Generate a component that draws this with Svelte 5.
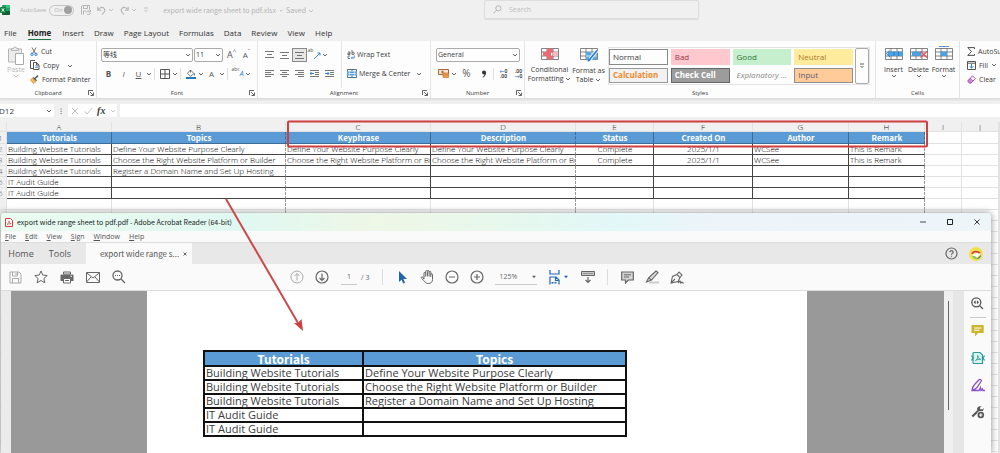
<script>
  const tabs = ['File', 'Home', 'Insert', 'Draw', 'Page Layout', 'Formulas', 'Data', 'Review', 'View', 'Help'];
  const columns = ['A', 'B', 'C', 'D', 'E', 'F', 'G', 'H', 'I', 'J'];
  const heads = ['Tutorials', 'Topics', 'Keyphrase', 'Description', 'Status', 'Created On', 'Author', 'Remark'];
  const b = 'Building Website Tutorials';
  const define = 'Define Your Website Purpose Clearly';
  const choose = 'Choose the Right Website Platform or Builder';
  const register = 'Register a Domain Name and Set Up Hosting';
  const rows = [
    [b, define, define, define, 'Complete', '2025/1/1', 'WCSee', 'This is Remark'],
    [b, choose, choose, choose, 'Complete', '2025/1/1', 'WCSee', 'This is Remark'],
    [b, register, '', '', '', '', '', ''],
    ['IT Audit Guide', '', '', '', '', '', '', ''],
    ['IT Audit Guide', '', '', '', '', '', '', '']
  ];
  const blankRows = Array.from({ length: 24 }, (_, i) => i + 7);
  const cellStyles = [
    ['Normal', 'normal'], ['Bad', 'bad'], ['Good', 'good'], ['Neutral', 'neutral'],
    ['Calculation', 'calc'], ['Check Cell', 'check'], ['Explanatory ...', 'explain'], ['Input', 'inputstyle']
  ];
  const lines = (a) => a.map(([x1, x2, y]) => `M${x1} ${y}H${x2}`).join('');
  const g = (d, extra = '') => `<path d="${d}" fill="none" stroke="currentColor" ${extra}/>`;
  const grid = '<path d="M.5 2.500h17v11h-17zM6 2.500v11M12 2.500v11M.5 6h17M.5 10h17" fill="#fff" stroke="#666" stroke-width=".8"/>';

  const icons = {
    excel: [10, 10, '<rect x="2" width="8" height="10" rx="1" fill="#21a366"/><path d="M6 0h3a1 1 0 0 1 1 1v2H6z" fill="#33c481"/><path d="M2 6h8v3a1 1 0 0 1-1 1H3a1 1 0 0 1-1-1z" fill="#185c37"/><rect y="2" width="6" height="6" rx="1" fill="#107c41"/><path d="M1.700 3.300l2.600 3.400M4.300 3.300L1.700 6.700" stroke="#fff" stroke-width=".9"/>'],
    saveCloud: [10, 10, g('M.5 9.500v-8l1-1h7v4M2.500.5v3h4v-3M2.500 9.500V6H5M5.500 7.500a2 2 0 0 1 3.500-1M9.500 5v2h-2M9.500 8a2 2 0 0 1-3.500 1')],
    undo: [9, 9, g('M.8.8v3.500h3.500M.8 4.300C3 1 5.500.8 7 2.300s1 3-.5 4.500L5 8.300', 'stroke-width="1.100"')],
    redo: [9, 9, g('M8.200.8v3.500H4.700M8.200 4.300C6 1 3.500.8 2 2.300s-1 3 .5 4.500L4 8.300', 'stroke-width="1.100"')],
    more: [6, 6, g('M1 1h4M1.500 3l1.500 1.500L4.500 3', 'stroke-width=".8"')],
    chev: [6, 4, g('M1 1l2 2 2-2', 'stroke-width=".8"')],
    search: [9, 9, g('M8 3.300a2.600 2.600 0 1 1-5.200 0 2.600 2.600 0 0 1 5.200 0zM3.500 5.300L.6 8.300')],
    paste: [17, 19, '<path d="M1.500 3h13v13h-13z" fill="#ececec" stroke="#b5b5b5"/><path d="M4.500 4.500v-2h2a1.500 1.500 0 0 1 3 0h2v2z" fill="#eee" stroke="#b5b5b5"/><path d="M8.500 7.500h8v11h-8z" fill="#fff" stroke="#aaa"/>'],
    cut: [8, 9, '<path d="M2 .5l3.500 6M6 .5L2.500 6.500" stroke="#555" stroke-width=".8"/><circle cx="2" cy="7.300" r="1.200" fill="none" stroke="#2b7cd3"/><circle cx="6" cy="7.300" r="1.200" fill="none" stroke="#2b7cd3"/>'],
    copy: [10, 10, '<path d="M3 8.500H.5v-8H5" fill="none" stroke="#555"/><path d="M3.500 2.500h3l2.500 2.500v4.500H3.500zM6.500 2.500V5H9" fill="#fff" stroke="#555"/><path d="M5 6h3M5 7.500h3" stroke="#2b7cd3" stroke-width=".7"/>'],
    painter: [9, 9, '<path d="M5 3.500L8 .6" stroke="#555" stroke-width="1.500"/><path d="M3 2.500l3.500 3.300" stroke="#444" stroke-width="1.200"/><path d="M2.500 3L6 6.500 3.500 8.600.5 5z" fill="#f7b765" stroke="#d98a2b" stroke-width=".7"/>'],
    borders: [10, 10, g('M.5.5h9v9h-9zM5 .5v9M.5 5h9')],
    fill: [10, 10, '<path d="M4.500 1L8 4.500 4.500 7.300 1.500 4.300zM4.500 1v2.500" fill="#fff" stroke="#555" stroke-width=".8"/><path d="M8.500 4.500v2" stroke="#2b7cd3"/><path d="M0 8h10v2H0z" fill="#2477b8"/>'],
    orient: [8, 10, '<path d="M1 9l6-6M7 5.500V3H4.500" fill="none" stroke="#2b7cd3" stroke-width=".9"/>'],
    top: [9, 8, g(lines([[0, 9, 0.5], [2, 7, 3.5], [0, 9, 6.5]]), 'stroke-width=".8"')],
    middle: [9, 8, g(lines([[0, 9, 1.5], [2, 7, 4.5], [0, 9, 7.5]]), 'stroke-width=".8"')],
    bottom: [9, 10, g(lines([[0, 9, 2.5], [2, 7, 5.5], [0, 9, 8.5]]), 'stroke-width=".8"')],
    left: [9, 8, g(lines([[0, 9, 0.5], [0, 6, 2.5], [0, 9, 4.5], [0, 6, 6.5]]), 'stroke-width=".8"')],
    center: [9, 8, g(lines([[0, 9, 0.5], [2, 7, 2.5], [0, 9, 4.5], [2, 7, 6.5]]), 'stroke-width=".8"')],
    right: [9, 8, g(lines([[0, 9, 0.5], [3, 9, 2.5], [0, 9, 4.5], [3, 9, 6.5]]), 'stroke-width=".8"')],
    outdent: [9, 8, g('M0 .5h9M5 2.500h4M5 4.500h4M0 6.500h9', 'stroke-width=".8"') + '<path d="M0 3.500h4M1.500 2L0 3.500 1.500 5" fill="none" stroke="#2b7cd3"/>'],
    indent: [9, 8, g('M0 .5h9M5 2.500h4M5 4.500h4M0 6.500h9', 'stroke-width=".8"') + '<path d="M0 3.500h4M2.500 2L4 3.500 2.500 5" fill="none" stroke="#2b7cd3"/>'],
    wrap: [8, 9, '<path d="M1 2h2v2.500H.8V3.300H3M5 0v4.500h2V2.300H5M3 6H1v2.500h2" fill="none" stroke="#555" stroke-width=".8"/><path d="M4.500 8h2.700V5.500M5.500 6.800L4.300 8l1.200 1" fill="none" stroke="#2b7cd3" stroke-width=".8"/>'],
    merge: [10, 9, '<path d="M.5.5h9v8h-9zM5 .5v2M5 6.500v2" fill="#fff" stroke="#50708f"/><path d="M0 2.500h10v4H0z" fill="#5aa3dc"/><path d="M1.500 4.500h7M3 3.300L1.700 4.500 3 5.700M7 3.300l1.300 1.200L7 5.700" stroke="#fff" fill="none" stroke-width=".7"/>'],
    money: [11, 9, '<path d="M.5.500h10v5H.5z" fill="#f7e2d0" stroke="#a0653c"/><circle cx="4.500" cy="3" r="1.200" fill="#a0653c"/><path d="M5 4h5.500v4.500H5z" fill="#f0a14c" stroke="#c9732b" stroke-width=".7"/><path d="M5 6h5.500" stroke="#c9732b" stroke-width=".7"/>'],
    comma: [6, 8, '<circle cx="3" cy="2.500" r="2" fill="#333"/><path d="M5 2.500C5 5 3.800 6.500 2 7.500L1.500 6.800C3 6 3.500 5 3.500 3.500z" fill="#333"/>'],
    cond: [18, 15, grid + '<path d="M6 2.500h6v4H6zM2 6h8v4H2zM6 10h6v3.500H6z" fill="#ea6a74"/><path d="M12 6h5v4h-5z" fill="#f7b9be"/>'],
    table: [18, 16, grid + '<path d="M6 6h11v7.500H6z" fill="#5aa9e6"/><path d="M6 10h11M12 6v7.500" stroke="#fff" stroke-width=".7"/><path d="M10 13l7-8.500" stroke="#fff" stroke-width="3.400"/><path d="M10 13l7-8.500" stroke="#2b7cd3" stroke-width="1.800"/><path d="M7.500 15.500c0-2 1-3 2-3l1 1c0 1.500-1.500 2-3 2z" fill="#2b7cd3"/>'],
    insert: [18, 15, grid + '<path d="M3 5.500h15v4.500H3z" fill="#4aa0e0"/><path d="M9 5.500v4.500M13.500 5.500v4.500" stroke="#2b6ca8" stroke-width=".7"/><path d="M5 4.500L1.500 7.800 5 11" fill="none" stroke="#2b7cd3"/>'],
    del: [18, 15, grid + '<path d="M2 5.500h9v4.500H2z" fill="#4aa0e0"/><path d="M10.500 5.500l6.500 6M17 5.500l-6.500 6" stroke="#e8505b" stroke-width="1.200"/>'],
    format: [18, 15, grid + '<path d="M5.500 5.500H12v4.500H5.500z" fill="#4aa0e0"/><path d="M4 .5h10" stroke="#2b7cd3" stroke-width=".8"/>'],
    sum: [8, 9, g('M7.500 2V.6H.8L4.500 4.500.8 8.400h6.700V7', 'stroke-width=".9"')],
    down: [9, 9, '<path d="M.5.5h8v8h-8z" fill="#fff" stroke="#555"/><path d="M.5 2.200h8" stroke="#555"/><path d="M4.500 3v4M2.700 5.300l1.800 1.800 1.800-1.800" fill="none" stroke="#2b7cd3"/>'],
    eraser: [9, 9, '<path d="M5.500.8L8.300 3.600 4 8H2.500L.8 6z" fill="#fff" stroke="#a24ab3"/><path d="M3.200 3.300L6 6 4 8H2.500L.8 6z" fill="#cf8add" stroke="#a24ab3" stroke-width=".7"/>'],
    launch: [6, 6, g('M.5 5V.5H5M2 2l3 3M5.500 2.500v3h-3', 'stroke-width=".8"')],
    cross: [8, 8, g('M1 1l6 6M7 1L1 7', 'stroke-width=".9"')],
    tick: [9, 8, g('M.8 4.500L3 7l5.300-6', 'stroke-width=".9"')],
    acro: [8, 9, '<path d="M.5.5h5l2 2v6h-7z" fill="#fff" stroke="#d8393b"/><path d="M2 6.500c1.500-1 2-2.300 2-3.500M4 3c0 1.500 1 2.500 2.200 2.700-1.500 0-3 .2-4.200.8" fill="none" stroke="#d8393b" stroke-width=".7"/>'],
    floppy: [13, 13, g('M1 1h9l2 2v9H1zM3.500 1v4h5V1M3.500 12V7.500h6V12M7 2v2')],
    star: [14, 14, g('M7 1l1.800 4.100 4.400.4-3.300 3 1 4.300L7 10.500l-3.900 2.300 1-4.300-3.300-3 4.400-.4z')],
    print: [14, 13, '<path d="M3.500 1h7v2h-7z" fill="none" stroke="currentColor"/><path d="M1.500 3.500h11a1 1 0 0 1 1 1V10H11V7.500H3V10H.5V4.500a1 1 0 0 1 1-1z" fill="currentColor"/><path d="M3.500 7.500h7v4.500h-7zM5 9.500h4" fill="#fff" stroke="currentColor"/><path d="M10.500 5.300H12" stroke="#fff"/>'],
    mail: [14, 11, g('M.5.5h13v10H.5zM.5.800L7 6l6.500-5.200M.5 10L5 5M13.500 10L9 5')],
    zoomout: [14, 14, g('M10 5.500a4.500 4.500 0 1 1-9 0 4.500 4.500 0 0 1 9 0zM9 9l4 4', 'stroke-width="1.300"') + '<path d="M3 5.500h1M5 5.500h1M7 5.500h1" stroke="currentColor" stroke-width="1.200"/>'],
    up: [14, 14, g('M13 7A6 6 0 1 1 1 7a6 6 0 0 1 12 0zM7 10.500v-7M4.500 6L7 3.500 9.500 6')],
    dn: [14, 14, g('M13 7A6 6 0 1 1 1 7a6 6 0 0 1 12 0zM7 3.500v7M4.500 8L7 10.500 9.500 8', 'stroke-width="1.200"')],
    pointer: [9, 13, '<path d="M1 0v11l2.500-2.300L5.200 12.500l1.900-.8-1.700-3.700H9z" fill="#2266b2"/>'],
    hand: [14, 14, g('M4 9V3.200a.8.8 0 0 1 1.700 0V1.500a.8.8 0 0 1 1.700 0v-.3a.8.8 0 0 1 1.700 0v1a.8.800 0 0 1 1.700 0V4.500a.8.800 0 0 1 1.700 0V9.500c0 2.500-1.500 4-4 4-2 0-3-.7-4-2.300L1.300 8c-.5-1 .6-1.600 1.300-.9zM5.700 3v3.500M7.400 2v4.500M9.100 2v4.500M10.800 4v3')],
    minus: [14, 14, g('M13 7A6 6 0 1 1 1 7a6 6 0 0 1 12 0zM4 7h6', 'stroke-width="1.200"')],
    plus: [14, 14, g('M13 7A6 6 0 1 1 1 7a6 6 0 0 1 12 0zM4 7h6M7 4v6', 'stroke-width="1.200"')],
    fit: [11, 15, '<path d="M1 0v4h9V0" fill="none" stroke="#2266b2" stroke-width="1.200"/><path d="M1 14.500V7h6l3 3v4.500M6.500 7v3.500H10" fill="none" stroke="#2266b2" stroke-width="1.200"/><path d="M2.500 12.800h6" stroke="#2266b2" stroke-width="1.400" stroke-dasharray="2 1"/>'],
    caret: [6, 4, '<path d="M1 .8h4L3 3.200z" fill="currentColor"/>'],
    scroll: [14, 14, '<path d="M.5 1.500h13v4H.5z" fill="#c8c8c8" stroke="currentColor"/><path d="M2.500 3.500h9" stroke="currentColor" stroke-dasharray="1 1"/><path d="M7 7v5.500M4.500 10L7 12.500 9.500 10" fill="none" stroke="currentColor" stroke-width="1.200"/>'],
    comment: [13, 13, '<path d="M.7 1h11.600v8H7.500L4.500 12V9H.7z" fill="#d4d4d4" stroke="currentColor" stroke-width="1.200"/><path d="M3 3.800h7M3 6h5" stroke="currentColor"/>'],
    pen: [14, 14, '<path d="M4 12.500h10" stroke="#ccc" stroke-width="2"/><path d="M11 1l2 1.500L6.500 10 3.500 8zM3.500 8L1.500 12l5-2" fill="#ddd" stroke="currentColor" stroke-width="1.100"/>'],
    sign: [14, 13, g('M1 12l1.500-6.500L7 3.500l3 3L8 10.500zM7 3.500L9 1l3 3-2 2.500M1 12l4-4M8 12l2-2 .8 2 1.200-1 .8 1H14', 'stroke-width="1.100"')],
    min: [6, 6, g('M0 3h6', 'stroke-width=".8"')],
    max: [6, 6, g('M.5.5h5v5h-5z')],
    close: [6, 6, g('M.5.5l5 5M5.500.5l-5 5', 'stroke-width=".9"')],
    tabclose: [4, 4, g('M.5.5l3 3M3.500.5l-3 3', 'stroke-width=".9"')],
    help: [13, 13, g('M12 6.500a5.500 5.500 0 1 1-11 0 5.500 5.500 0 0 1 11 0zM4.800 5.200c0-2.200 3.400-2.200 3.400 0C8.200 6.300 6.500 6.300 6.500 7.800M6.500 8.700v1.100', 'stroke-width="1.200"')],
    avatar: [14, 14, '<circle cx="7" cy="7" r="7" fill="#f1e24c"/><path d="M3 8.500C5 6 9 5 12 7L8 10z" fill="#fff"/><path d="M2 6.500C4 3.300 8 2.300 12 6l-2.500.5C7.500 4.800 5.500 5 3.500 7z" fill="#d8324a"/><path d="M7 12c2-1 3.500-2.500 5-4.500l-.3 2.300C10.500 11.500 9 12.300 7 12z" fill="#3a6fb5"/><path d="M2.500 8.500l4 1 2 3-3.500-1z" fill="#7fc06a"/>'],
    zoomrail: [13, 13, g('M9.800 5.300a4.500 4.500 0 1 1-9 0 4.500 4.500 0 0 1 9 0zM8.600 8.600L12 12', 'stroke-width="1.300"') + '<path d="M2.500 5.300l2.200-2v4zM8.100 5.300l-2.200-2v4z" fill="currentColor"/>'],
    note: [13, 13, '<path d="M1 1h11a.7.7 0 0 1 .7.7V9H7l-3 3.500V9H.5V1.700A.7.7 0 0 1 1 1z" fill="#cdb52e"/><path d="M3 4h7.500M3 6.200h5.500" stroke="#fff"/>'],
    pdfx: [14, 14, '<path d="M3 1.500h6L11.500 4v8.500H3a1 1 0 0 1-1-1v-9a1 1 0 0 1 1-1z" fill="#d9f3f1" stroke="#2f9a96" stroke-width="1.200"/><path d="M4.500 9.500C6 8.500 6.900 7 6.800 4.500 7 7 8 8 9.800 8.300 8 8.300 6 8.500 4.500 9.500z" fill="none" stroke="#2f9a96" stroke-width=".9"/><path d="M.5 4.500L2 7 .5 9.500M13.500 4.500L12 7l1.500 2.500" fill="none" stroke="#2f9a96" stroke-width="1.300"/>'],
    signrail: [14, 14, '<path d="M1 12.500c0-3 1.500-5 3-6.500l4-4.300c1.500-1 3 .3 2 1.800L6 9.500C4.500 11 3 12 1 12.500zM1 12.500h7l1.500-3 .5 3 1.500-1.500.5 1.500H14" fill="none" stroke="#8a4fc4" stroke-width="1.300"/>'],
    wrench: [14, 14, '<path d="M1.300 11.500L7.500 5.500" stroke="currentColor" stroke-width="2.200"/><path d="M6 4.500C6 2 8 .8 10.500 1.300L8.800 3l.8 1.400 2-.2L12.500 3c.5 2-1 4-3.800 4z" fill="currentColor"/><circle cx="9.800" cy="10" r="3.900" fill="#fafafa"/><circle cx="9.800" cy="10" r="3.300" fill="currentColor"/><path d="M8 10h3.600M9.800 8.200v3.600" stroke="#fff"/>']
  };
  let page = $state('1');
</script>

{#snippet icon(name)}
  <svg class="icon" width={icons[name][0]} height={icons[name][1]} viewBox="0 0 {icons[name][0]} {icons[name][1]}" aria-hidden="true">{@html icons[name][2]}</svg>
{/snippet}
{#snippet slot(name, label)}
  <button class="slot" aria-label={label}>{@render icon(name)}</button>
{/snippet}
{#snippet chev(label)}
  <button class="chev" aria-label={label}>{@render icon('chev')}</button>
{/snippet}
{#snippet tool(name, label)}
  <button class="tool" aria-label={label}>{@render icon(name)}</button>
{/snippet}

<div class="desktop">
  <header class="titlebar">
    {@render icon('excel')}
    <label class="autosave">AutoSave
      <input type="checkbox" role="switch" checked /><span class="switch">On<i></i></span>
    </label>
    <div class="quick">
      <button aria-label="Save">{@render icon('saveCloud')}</button>
      <button aria-label="Undo">{@render icon('undo')}{@render icon('chev')}</button>
      <button aria-label="Redo">{@render icon('redo')}{@render icon('chev')}</button>
      <button aria-label="Customize">{@render icon('more')}</button>
    </div>
    <span class="docname">export wide range sheet to pdf.xlsx • Saved {@render icon('chev')}</span>
    <label class="search">{@render icon('search')}<input type="search" placeholder="Search" aria-label="Search" /></label>
  </header>

  <nav class="tabs">
    {#each tabs as tab}
      <a href="#{tab}" class:active={tab === 'Home'}>{tab}</a>
    {/each}
  </nav>

  <div class="ribbon">
    <section class="group clipboard">
      <div class="body">
        <button class="big faded">{@render icon('paste')}<span>Paste</span>{@render icon('chev')}</button>
        <div class="stack">
          <button>{@render icon('cut')}Cut</button>
          <button>{@render icon('copy')}<span>Copy</span><span class="gapchev">{@render icon('chev')}</span></button>
          <button>{@render icon('painter')}Format Painter</button>
        </div>
      </div>
      <footer>Clipboard<button aria-label="Clipboard settings">{@render icon('launch')}</button></footer>
    </section>

    <section class="group font">
      <div class="body rows">
        <div class="row">
          <span class="combo family"><select aria-label="Font"><option>等线</option></select>{@render icon('chev')}</span>
          <span class="combo size"><select aria-label="Font size"><option>11</option></select>{@render icon('chev')}</span>
          <button class="slot letter grow">A<sup>^</sup></button>
          <button class="slot letter">A<sup>ˇ</sup></button>
        </div>
        <div class="row">
          <button class="slot letter"><b>B</b></button>
          <button class="slot letter"><em>I</em></button>
          <button class="slot letter"><u>U</u></button>
          {@render chev('Underline options')}<i class="sep"></i>
          {@render slot('borders', 'Borders')}{@render chev('Border options')}<i class="sep"></i>
          {@render slot('fill', 'Fill color')}{@render chev('Fill options')}
          <button class="slot letter">A</button>{@render chev('Font color options')}<i class="sep"></i>
          <button class="slot abc"><sup>abc</sup><em>A</em></button>{@render chev('Phonetic options')}
        </div>
      </div>
      <footer>Font<button aria-label="Font settings">{@render icon('launch')}</button></footer>
    </section>

    <section class="group align">
      <div class="body">
        <div class="rows">
          <div class="row">
            {@render slot('top', 'Top align')}{@render slot('middle', 'Middle align')}
            <button class="slot selected" aria-label="Bottom align">{@render icon('bottom')}</button>
            <button class="slot abc"><sup>ab</sup>{@render icon('orient')}</button>{@render chev('Orientation')}
          </div>
          <div class="row">
            {@render slot('left', 'Align left')}{@render slot('center', 'Center')}{@render slot('right', 'Align right')}
            {@render slot('outdent', 'Decrease indent')}{@render slot('indent', 'Increase indent')}
          </div>
        </div>
        <div class="rows divided">
          <div class="row"><button class="text">{@render icon('wrap')}Wrap Text</button></div>
          <div class="row"><button class="text">{@render icon('merge')}Merge &amp; Center</button>{@render chev('Merge options')}</div>
        </div>
      </div>
      <footer>Alignment<button aria-label="Alignment settings">{@render icon('launch')}</button></footer>
    </section>

    <section class="group number">
      <div class="body rows">
        <div class="row"><span class="combo general"><select aria-label="Number format"><option>General</option></select>{@render icon('chev')}</span></div>
        <div class="row">
          {@render slot('money', 'Accounting format')}{@render chev('Currency')}
          <button class="slot wide letter large">%</button>
          {@render slot('comma', 'Comma style')}<i class="sep"></i>
          <button class="slot dec"><span><i>←</i>0</span><span>.00</span></button>
          <button class="slot dec"><span>.00</span><span><i>→</i>0</span></button>
        </div>
      </div>
      <footer>Number<button aria-label="Number settings">{@render icon('launch')}</button></footer>
    </section>

    <section class="group styles">
      <div class="body">
        <button class="big">{@render icon('cond')}<span>Conditional<br />Formatting {@render icon('chev')}</span></button>
        <button class="big">{@render icon('table')}<span>Format as<br />Table {@render icon('chev')}</span></button>
        <div class="gallery">
          <div class="swatches">
            {#each cellStyles as [label, kind]}<button class={kind}>{label}</button>{/each}
          </div>
          <button class="expand" aria-label="More styles">{@render icon('more')}</button>
        </div>
      </div>
      <footer>Styles</footer>
    </section>

    <section class="group cells">
      <div class="body">
        <button class="big">{@render icon('insert')}<span>Insert</span>{@render icon('chev')}</button>
        <button class="big">{@render icon('del')}<span>Delete</span>{@render icon('chev')}</button>
        <button class="big">{@render icon('format')}<span>Format</span>{@render icon('chev')}</button>
      </div>
      <footer>Cells</footer>
    </section>

    <section class="group editing">
      <div class="body stack">
        <button>{@render icon('sum')}AutoSum</button>
        <button>{@render icon('down')}Fill {@render icon('chev')}</button>
        <button>{@render icon('eraser')}Clear {@render icon('chev')}</button>
      </div>
    </section>
  </div>

  <div class="formulabar">
    <div class="namebox"><input value="D12" aria-label="Name box" />{@render icon('chev')}</div>
    <span class="dots">⁝</span>
    <div class="fx">
      <button class="faint" aria-label="Cancel">{@render icon('cross')}</button>
      <button class="faint" aria-label="Enter">{@render icon('tick')}</button>
      <button aria-label="Insert function"><em>fx</em></button>
      <span class="faint">{@render icon('chev')}</span>
    </div>
    <input class="formula" aria-label="Formula" />
  </div>

  <div class="sheet">
    <table>
      <colgroup>
        <col class="rowhead" />{#each columns as c}<col class="c{c}" />{/each}<col />
      </colgroup>
      <thead>
        <tr><th></th>{#each columns as c}<th>{c}</th>{/each}<th></th></tr>
      </thead>
      <tbody>
        <tr class="heads"><th>1</th>{#each heads as h}<td>{h}</td>{/each}<td></td><td></td><td></td></tr>
        {#each rows as row, i}
          <tr class="data"><th>{i + 2}</th>{#each row as cell}<td>{cell}</td>{/each}<td></td><td></td><td></td></tr>
        {/each}
        {#each blankRows as n}
          <tr><th></th>{#each columns as c}<td></td>{/each}<td></td></tr>
        {/each}
      </tbody>
    </table>
  </div>

  <main class="window">
    <div class="wintitle">
      {@render icon('acro')}<span>export wide range sheet to pdf.pdf - Adobe Acrobat Reader (64-bit)</span>
      <div class="winbuttons">
        <button aria-label="Minimize">{@render icon('min')}</button>
        <button aria-label="Maximize">{@render icon('max')}</button>
        <button aria-label="Close">{@render icon('close')}</button>
      </div>
    </div>
    <nav class="menu">
      {#each ['File', 'Edit', 'View', 'Sign', 'Window', 'Help'] as m}<button><u>{m[0]}</u>{m.slice(1)}</button>{/each}
    </nav>
    <div class="wintabs">
      <button>Home</button><button>Tools</button>
      <div class="doctab">export wide range s... <button aria-label="Close tab">{@render icon('tabclose')}</button></div>
      <div class="account">{@render icon('help')}{@render icon('avatar')}</div>
    </div>
    <div class="toolbar">
      <div class="tools">
        <span class="dim">{@render tool('floppy', 'Save')}</span>{@render tool('star', 'Star')}{@render tool('print', 'Print')}{@render tool('mail', 'Email')}{@render tool('zoomout', 'Find')}
      </div>
      <div class="tools mid">
        <span class="dim">{@render tool('up', 'Previous page')}</span>{@render tool('dn', 'Next page')}
        <label class="pages"><input bind:value={page} aria-label="Page" />/ 3</label>
        <i class="bar"></i>
        {@render tool('pointer', 'Select')}{@render tool('hand', 'Pan')}{@render tool('minus', 'Zoom out')}{@render tool('plus', 'Zoom in')}
        <span class="zoom"><select aria-label="Zoom"><option>125%</option></select>{@render icon('caret')}</span>
        <button class="tool fit" aria-label="Fit width">{@render icon('fit')}{@render icon('caret')}</button>
        {@render tool('scroll', 'Scrolling')}
        <i class="bar"></i>
        {@render tool('comment', 'Comment')}{@render tool('pen', 'Highlight')}{@render tool('sign', 'Sign')}
      </div>
    </div>
    <div class="viewer">
      <div class="gutter"></div>
      <div class="canvas">
        <article class="page">
          <table>
            <colgroup><col class="first" /><col /></colgroup>
            <thead><tr><th>Tutorials</th><th>Topics</th></tr></thead>
            <tbody>{#each rows as row}<tr><td>{row[0]}</td><td>{row[1]}</td></tr>{/each}</tbody>
          </table>
        </article>
      </div>
      <div class="scroller"><i></i></div>
      <div class="handle"></div>
      <aside class="rail">
        {@render tool('zoomrail', 'Search tools')}
        <hr />
        {@render tool('note', 'Comment')}{@render tool('pdfx', 'Export PDF')}{@render tool('signrail', 'Fill and sign')}{@render tool('wrench', 'More tools')}
      </aside>
    </div>
  </main>

  <svg class="marks" viewBox="0 0 1000 453" width="1000" height="453" aria-hidden="true">
    <rect x="288" y="121.500" width="639" height="25" rx="1" fill="none" stroke="#d03e40" stroke-width="2" />
    <path d="M226 199L298 323" stroke="#c94a4c" stroke-width="2" />
    <path d="M303 331l-9-8 4 0 3.500-4z" fill="#d03e40" />
  </svg>
</div>

<style>
  :global(body) { margin: 0; }
  .desktop {
    position: relative; display: flex; flex-direction: column; height: 100vh; overflow: hidden;
    background: #f0f0f0; color: #3a3a3a; font: 7px/9px "Open Sans", "Noto Sans CJK SC", sans-serif;
  }
  .desktop :is(button, input, select) {
    font: inherit; color: inherit; background: none; border: 0; padding: 0; margin: 0; appearance: none; outline: 0; border-radius: 0;
  }
  .icon { flex: none; display: inline-block; vertical-align: middle; }
  button { display: inline-flex; align-items: center; justify-content: center; white-space: nowrap; }

  .titlebar { display: flex; align-items: center; height: 20px; color: #b4b4b4; position: relative; }
  .autosave { display: flex; align-items: center; gap: 3px; margin-left: 10px; font-size: 6px; }
  .desktop .autosave input { position: absolute; opacity: 0; }
  .switch { display: flex; align-items: center; justify-content: space-between; width: 18px; height: 9px; padding: 0 1px 0 4px; border: 1px solid #c4c4c4; border-radius: 6px; }
  .switch i { width: 8px; height: 8px; border-radius: 50%; background: #a0a0a0; }
  .quick { display: flex; gap: 6px; margin-left: 7px; }
  .quick button { gap: 2px; }
  .docname { margin-left: 14px; white-space: nowrap; font-family: "Noto Sans CJK SC", sans-serif; }
  .search { position: absolute; left: 484px; right: 301px; top: 0; height: 19px; box-sizing: border-box; display: flex; align-items: center; gap: 7px; padding-left: 8px; border: 1px solid #ddd; border-radius: 2px; box-shadow: 0 1px 1px #ddd; }
  .search input { flex: 1; min-width: 0; }
  .search input::placeholder { color: #c0c0c0; opacity: 1; }

  .tabs { display: flex; gap: 10px; height: 21px; padding-left: 4px; font-size: 8px; line-height: 12px; align-items: center; }
  .tabs a { color: #333; text-decoration: none; white-space: nowrap; padding: 5px 0 0; border-bottom: 1px solid transparent; }
  .tabs .active { font-weight: 700; border-color: #217346; color: #222; margin: 0 1px; }

  .ribbon { display: flex; height: 58px; background: #fdfdfd; border-bottom: 1px solid #dcdcdc; box-sizing: border-box; box-shadow: 0 1px 2px #ddd; }
  .group { flex: none; box-sizing: border-box; display: flex; flex-direction: column; border-right: 1px solid #e4e4e4; background-clip: padding-box; }
  .body { display: flex; height: 47px; }
  .group footer { position: relative; display: flex; justify-content: center; align-items: center; height: 10px; font-size: 6px; }
  .group footer button { position: absolute; right: 2px; }
  .clipboard { width: 97px; } .font { width: 161px; } .align { width: 173px; } .number { width: 94px; }
  .styles { width: 351px; } .cells { width: 84px; } .editing { width: 60px; border: 0; }
  .clipboard .body { padding-left: 7px; gap: 5px; }
  .big { flex-direction: column; justify-content: flex-start; text-align: center; }
  .desktop .big { padding-top: 5px; }
  .desktop .faded { color: #b8b8b8; }
  .stack { display: flex; flex-direction: column; padding-top: 3px; height: 44px; }
  .stack button { height: 14px; gap: 3px; justify-content: flex-start; }
  .gapchev { margin-left: 5px; }
  .rows { display: flex; flex-direction: column; padding-top: 5px; gap: 2px; box-sizing: border-box; }
  .row { display: flex; align-items: center; height: 17px; }
  .font .body { padding-left: 4px; }
  .slot { flex: none; width: 15px; height: 14px; }
  .desktop .slot { color: #555; }
  .wide { width: 19px; }
  .chev { flex: none; width: 6px; height: 14px; }
  .sep { flex: none; width: 1px; height: 12px; margin: 0 2px; background: #ddd; }
  .combo { position: relative; display: flex; align-items: center; box-sizing: border-box; height: 14px; border: 1px solid #aaa; border-radius: 2px; background: #fff; padding-right: 1px; margin-right: 1px; }
  .combo select { flex: 1; min-width: 0; padding-left: 1px; }
  .family { width: 92px; } .size { width: 29px; } .general { width: 84px; }
  .desktop .letter { font-size: 8px; }
  .desktop .grow { font-size: 9px; }
  .desktop .large { font-size: 10px; }
  .letter sup { font-size: 6px; line-height: 6px; align-self: flex-start; }
  .abc { font-size: 7px; }
  .abc sup { font-size: 5px; line-height: 5px; align-self: flex-start; }
  .abc em { color: #2b7cd3; }
  .align .body { padding-left: 4px; }
  .desktop .selected { background: #e6e6e6; box-shadow: inset 0 0 0 1px #8a8a8a; }
  .divided { margin-left: 4px; padding-left: 5px; border-left: 1px solid #e4e4e4; }
  .desktop .text { gap: 2px; margin-right: 6px; }
  .number .body { padding-left: 5px; }
  .desktop .dec { flex-direction: column; font-size: 5px; line-height: 5px; color: #222; font-weight: 600; }
  .dec i { color: #2b7cd3; font-style: normal; }
  .styles .body { padding-left: 5px; }
  .styles .big { width: 39px; }
  .styles .big .icon:first-child, .cells .icon:first-child { margin-bottom: 4px; }
  .gallery { flex: 1; display: flex; margin: 6px 5px 0 0; height: 38px; border: 1px solid #e4e4e4; box-sizing: border-box; }
  .swatches { flex: 1; display: grid; grid-template-columns: repeat(4, 1fr); gap: 3px; padding: 1px 2px 1px 0; }
  .desktop .swatches button { justify-content: flex-start; padding-left: 3px; font-size: 8px; line-height: 12px; border: 1px solid transparent; }
  .desktop .swatches .normal { border-color: #8a8a8a; }
  .desktop .swatches .bad { background: #ffc7ce; color: #9c3a44; }
  .desktop .swatches .good { background: #c6efce; color: #2b7236; }
  .desktop .swatches .neutral { background: #ffeb9c; color: #a67a28; }
  .desktop .swatches .calc { background: #f2f2f2; color: #f08a2c; border-color: #999; font-weight: 700; }
  .desktop .swatches .check { background: #9c9c9c; color: #fff; border-color: #666; font-weight: 700; }
  .desktop .swatches .explain { color: #8a8a8a; font-style: italic; }
  .desktop .swatches .inputstyle { background: #ffcc99; color: #5f5a76; border-color: #8f8f8f; }
  .desktop .expand { width: 14px; border: 1px solid #aaa; border-radius: 2px; }
  .cells .body { padding-left: 5px; }
  .cells .big { width: 25px; }
  .editing .stack { padding-left: 7px; }

  .formulabar { display: flex; height: 13px; margin: 5px 0; font-size: 8px; }
  .namebox { display: flex; align-items: center; width: 54px; background: #fff; padding-right: 2px; box-sizing: border-box; }
  .namebox input { flex: 1; min-width: 0; text-indent: -1px; }
  .dots { width: 14px; text-align: center; line-height: 13px; }
  .fx { display: flex; align-items: center; justify-content: space-between; width: 49px; margin-right: 3px; padding: 0 1px 0 3px; background: #fff; box-sizing: border-box; }
  .fx em { font: italic 700 10px/12px "Liberation Serif", serif; }
  .desktop .faint { color: #bbb; }
  .fx span { display: flex; }
  .desktop .formula { flex: 1; background: #fff; }

  .sheet { flex: 1; min-height: 0; overflow: hidden; background: #fff; color: #000; }
  .sheet table { width: 100%; table-layout: fixed; border-collapse: separate; border-spacing: 0; }
  .rowhead { width: 7px; } .cA { width: 105px; } .cB { width: 174px; } .cC, .cD { width: 145px; } .cE { width: 78px; }
  .cF { width: 99px; } .cG { width: 96px; } .cH { width: 76px; } .cI, .cJ { width: 37px; }
  .sheet :is(th, td) { height: 11px; box-sizing: border-box; padding: 0; font-weight: 300; font-size: 8px; line-height: 10px; white-space: nowrap; overflow: hidden; border: 0 solid #e2e2e2; border-width: 0 1px 1px 0; }
  .sheet thead th { background: #f0f0f0; color: #222; line-height: 9px; height: 10px; }
  .sheet tbody th { background: #f0f0f0; color: #666; text-align: left; text-indent: -2px; }
  .sheet td { padding-left: 1px; }
  .sheet .heads td { height: 12px; }
  .sheet .heads td:nth-child(-n + 9) { background: #5b9bd5; color: #fff; font: 700 8px/11px "Noto Sans CJK SC", sans-serif; text-align: center; border-color: #3c6b96; }
  .data td:nth-child(-n + 9) { border-color: #444; }
  .data td:is(:nth-child(6), :nth-child(7)) { text-align: center; }
  .sheet tbody td:is(:nth-child(3), :nth-child(5), :nth-child(9)) { border-right: 1px dashed #999; }

  .window { position: absolute; top: 213px; left: 1px; right: 9px; bottom: 0; display: flex; flex-direction: column; background: #fafafa; border-radius: 4px 4px 0 0; box-shadow: 0 0 7px #8a8a8a; overflow: hidden; }
  .wintitle { display: flex; align-items: center; gap: 4px; height: 18px; padding-left: 4px; color: #222; background: linear-gradient(90deg, #e9fcf0, #e0f8f1 25%, #eff7e6 38%, #e6f8ee 52%, #e2f8f8 62%, #edf4fa 72%, #eef5f9); font-family: "Noto Sans CJK SC", sans-serif; }
  .winbuttons { margin-left: auto; display: flex; gap: 21px; padding-right: 11px; }
  .menu { display: flex; gap: 9px; height: 11px; padding-left: 4px; color: #555; }
  .wintabs { display: flex; align-items: stretch; height: 22px; background: #e8e8e8; font-size: 9px; color: #555; border-top: 1px solid #ddd; box-sizing: border-box; }
  .wintabs > button { width: 38px; }
  .wintabs > button:first-child { width: 40px; }
  .doctab { display: flex; align-items: center; gap: 4px; margin-left: 7px; padding: 0 5px 0 14px; background: #fafafa; font: 8px/12px "Noto Sans CJK SC", sans-serif; white-space: nowrap; }
  .account { display: flex; align-items: center; gap: 11px; margin-left: auto; padding-right: 8px; color: #666; }
  .toolbar { display: flex; height: 27px; border-bottom: 1px solid #ddd; box-sizing: border-box; color: #666; padding-left: 7px; gap: 164px; }
  .tools { display: flex; align-items: center; gap: 12px; }
  .mid { gap: 11px; }
  .tool { width: 14px; height: 15px; flex: none; }
  .dim { display: flex; color: #aaa; }
  .pages { display: flex; align-items: center; gap: 4px; margin: 0 1px; }
  .pages input { width: 16px; height: 15px; text-align: center; }
  .bar { width: 1px; height: 16px; margin: 0 1px; background: #ddd; }
  .zoom { display: flex; align-items: center; height: 15px; width: 42px; padding-left: 4px; box-sizing: border-box; }
  .zoom select { flex: 1; min-width: 0; }
  .desktop .pages input, .desktop .zoom { border-bottom: 1px solid #ccc; }
  .desktop .fit { width: 22px; color: #2266b2; gap: 3px; }
  .viewer { flex: 1; min-height: 0; display: flex; }
  .gutter { width: 10px; background: #ebebeb; }
  .canvas { flex: 1; min-width: 0; background: #999; padding: 0 137px 0 136px; overflow: hidden; }
  .page { height: 100%; background: #fff; padding: 59px 0 0 56px; box-sizing: border-box; }
  .page table { width: 424px; table-layout: fixed; border-collapse: collapse; color: #3c3c3c; font: 11px/12px "Open Sans", sans-serif; }
  .first { width: 159px; }
  .page :is(th, td) { border: 2px solid #111; padding: 0 1px; height: 12px; box-sizing: content-box; white-space: nowrap; text-align: left; }
  .page th { background: #5b9bd5; color: #fff; text-align: center; font: 700 12px/13px "Noto Sans CJK SC", sans-serif; }
  .scroller { width: 9px; background: #f0f0f0; padding: 10px 0 0 4px; box-sizing: border-box; }
  .scroller i { display: block; width: 1px; height: 109px; background: #666; }
  .handle { width: 11px; background: #e6e6e6; }
  .rail { width: 27px; display: flex; flex-direction: column; align-items: center; gap: 12px; padding-top: 5px; box-sizing: border-box; color: #555; background: #fafafa; }
  .rail hr { width: 16px; border: 0; border-top: 1px solid #ccc; margin: -6px 0 -7px; }

  .marks { position: absolute; top: 0; left: 0; pointer-events: none; }
</style>
